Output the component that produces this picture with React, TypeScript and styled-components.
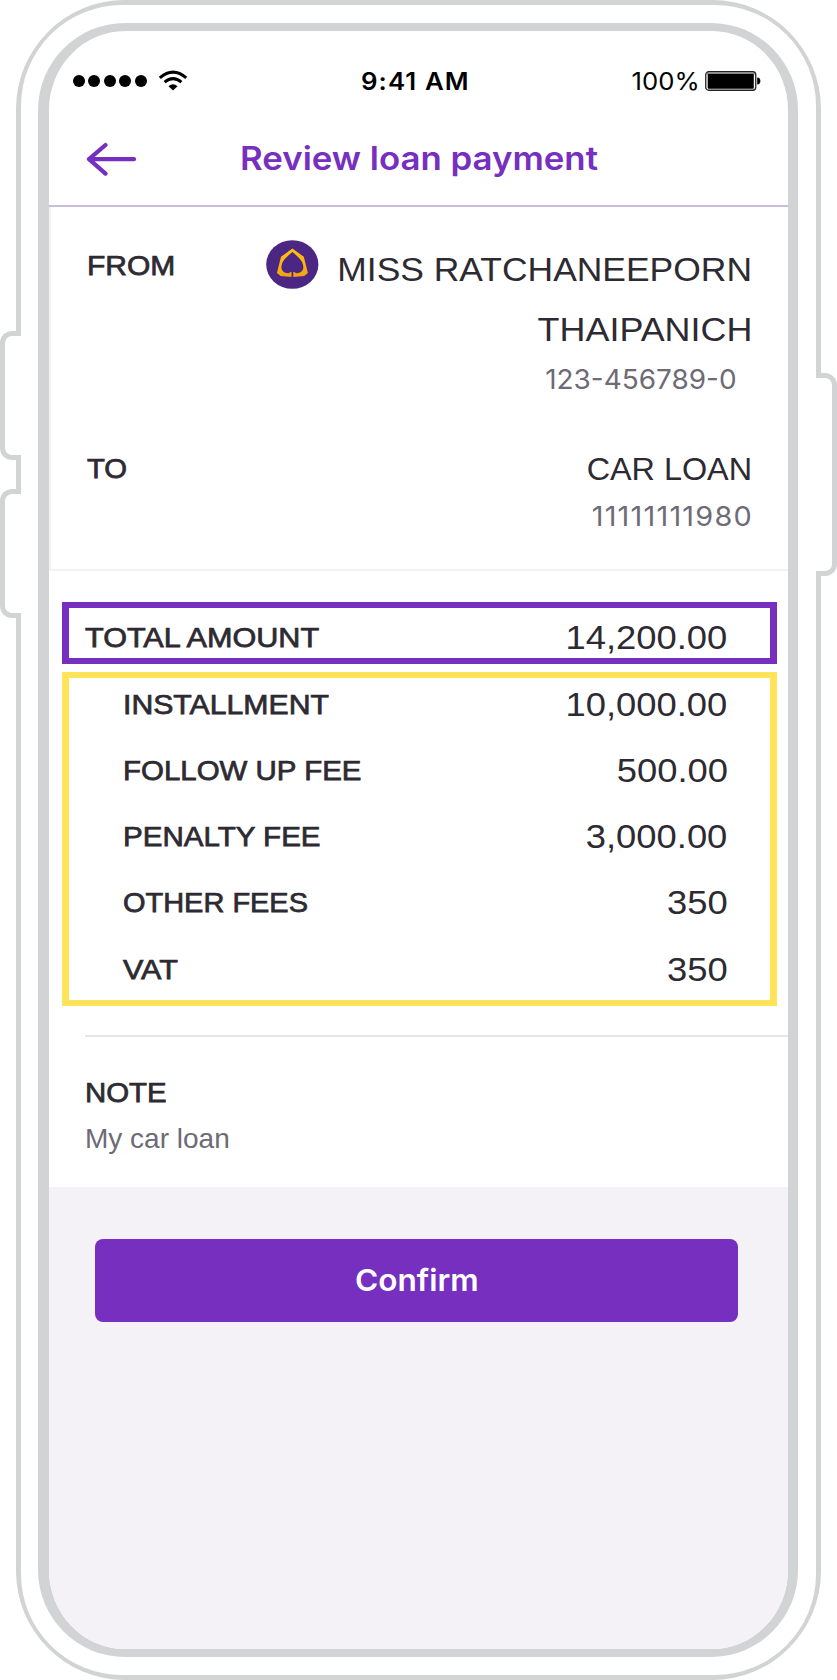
import React from "react";
import styled, { createGlobalStyle } from "styled-components";

const purple = "#762fbf";
const ink = "#2d2a32";
const muted = "#6e6a76";
const bezel = "#d1d3d4";
const helvetica = `"Liberation Sans", Arial, sans-serif`;
const inter = `Inter, "Liberation Sans", sans-serif`;

const GlobalStyle = createGlobalStyle`
  *, *::before, *::after { box-sizing: border-box; }
  body { margin: 0; background: #fff; font-family: ${helvetica}; color: ${ink}; }
`;

/* ---------- device ---------- */

const Device = styled.div`
  position: relative;
  width: 837px;
  height: 1680px;
  padding: 0 16px;
`;

const OuterEdge = styled.div`
  height: 100%;
  padding: 5px;
  border-radius: 109px;
  background: ${bezel};
`;

const Casing = styled.div`
  height: 100%;
  padding: 18px 18px 18px 17px;
  border-radius: 101px;
  background: #fff;
`;

const InnerEdge = styled.div`
  height: 100%;
  padding: 8px 10px 8px 11px;
  border-radius: 87px;
  background: ${bezel};
`;

const Screen = styled.main`
  display: flex;
  flex-direction: column;
  height: 100%;
  overflow: hidden;
  border-radius: 76px / 79px;
  background: #fff;
`;

const SideButton = styled.span<{ $side: "left" | "right"; $top: number; $height: number }>`
  position: absolute;
  top: ${(p) => p.$top}px;
  height: ${(p) => p.$height}px;
  width: 21px;
  background: #fff;
  border: 5px solid ${bezel};
  ${(p) =>
    p.$side === "left"
      ? "left: 0; border-right: 0; border-radius: 12px 0 0 12px;"
      : "right: 0; border-left: 0; border-radius: 0 12px 12px 0;"}
`;

/* ---------- text ---------- */

const Text = styled.span<{ $stretch: number; $end?: boolean }>`
  display: inline-block;
  white-space: nowrap;
  transform: scaleX(${(p) => p.$stretch});
  transform-origin: ${(p) => (p.$end ? "right" : "left")} center;
`;

const Label = styled(Text)`
  margin: 1px 0 -1px;
  font-size: 28px;
  line-height: 36px;
  -webkit-text-stroke: 0.75px ${ink};
`;

const Amount = styled(Text)`
  font-size: 34px;
  line-height: 36px;
`;

const AccountNumber = styled(Text)<{ $spacing?: number }>`
  font-family: ${inter};
  font-size: 26.5px;
  line-height: 36px;
  letter-spacing: ${(p) => p.$spacing ?? 0}px;
  color: ${muted};
`;

/* ---------- status bar & header ---------- */

const StatusBar = styled.div`
  display: grid;
  grid-template-columns: 312px 1fr auto;
  align-items: center;
  flex: none;
  height: 100px;
  padding-right: 27px;
  font-family: ${inter};
  font-size: 24px;
  color: #000;
`;

const Signal = styled.div`
  display: flex;
  align-items: center;
  padding-left: 23.5px;
`;

const Dots = styled.div`
  display: flex;
  gap: 3.6px;
`;

const Dot = styled.i`
  width: 12px;
  height: 12px;
  border-radius: 50%;
  background: #000;
`;

const WifiIcon = styled.svg`
  margin-left: 11px;
`;

const Time = styled(Text)`
  font-weight: 600;
  letter-spacing: 1px;
`;

const Power = styled.div`
  display: flex;
  align-items: center;
  gap: 5px;
`;

const Header = styled.header`
  display: flex;
  align-items: flex-start;
  flex: none;
  height: 76px;
  padding-left: 35px;
  border-bottom: 2px solid #cbbcdc;
`;

const BackIcon = styled.svg`
  margin-top: 11px;
`;

const Title = styled(Text)`
  margin: 7.7px 0 0 101px;
  font-family: ${inter};
  font-size: 32.5px;
  font-weight: 600;
  line-height: 40px;
  color: ${purple};
`;

/* ---------- accounts ---------- */

const Accounts = styled.section`
  flex: none;
  height: 364px;
  padding: 33px 36px 0 36px;
  border-left: 2px solid #f3f3f6;
  border-bottom: 2px solid #f3f3f6;
`;

const Party = styled.div<{ $gap?: number }>`
  display: flex;
  align-items: flex-start;
  margin-top: ${(p) => p.$gap ?? 0}px;
`;

const PartyLabel = styled.div<{ $offset?: number }>`
  display: flex;
  width: 179px;
  padding-top: ${(p) => p.$offset ?? 0}px;
`;

const PartyDetail = styled.div`
  flex: 1;
  display: flex;
  flex-direction: column;
  align-items: flex-end;
`;

const OwnerName = styled(Text)`
  font-size: 34px;
  line-height: 60px;

  &:first-child {
    margin-top: -1px;
  }
`;

const OwnerAccount = styled(AccountNumber)`
  margin: 2px 15px 0 0;
`;

const LoanName = styled(Text)`
  margin-top: 1px;
  font-size: 31.5px;
  line-height: 36px;
`;

const LoanNumber = styled(AccountNumber)`
  margin: 11px -1px 0 0;
`;

/* ---------- amounts ---------- */

const Amounts = styled.section`
  display: flex;
  flex-direction: column;
  gap: 8px;
  flex: none;
  padding: 31px 11px 29px 13px;
`;

const TotalBox = styled.div`
  height: 62px;
  padding: 8px 42.5px 0 16px;
  border: solid ${purple};
  border-width: 6px 7px;
`;

const FeesBox = styled.div`
  display: flex;
  flex-direction: column;
  gap: 30.15px;
  height: 334px;
  padding: 8px 42.5px 0 54px;
  border: solid #ffe359;
  border-width: 6px 7px;
`;

const Line = styled.div`
  display: flex;
  justify-content: space-between;
  align-items: center;
`;

const TotalLine = styled(Line)`
  height: 42px;
`;

/* ---------- note & footer ---------- */

const Note = styled.section`
  display: flex;
  flex-direction: column;
  align-items: flex-start;
  flex: none;
  height: 152px;
  margin-left: 36px;
  padding-top: 37px;
  border-top: 2px solid #e6e6eb;
`;

const NoteText = styled(Text)`
  margin-top: 11px;
  font-size: 27.2px;
  line-height: 36px;
  color: ${muted};
`;

const Footer = styled.footer`
  flex: 1;
  padding: 52px 50px 0 46px;
  background: #f4f2f6;
`;

const ConfirmButton = styled.button`
  display: flex;
  align-items: center;
  justify-content: center;
  width: 100%;
  height: 83px;
  padding-bottom: 2px;
  border: 0;
  border-radius: 8px;
  background: ${purple};
  color: #fff;
  font-family: ${inter};
  font-size: 30px;
  font-weight: 600;
`;

const ButtonText = styled(Text)`
  transform-origin: center;
`;

const fees = [
  { name: "INSTALLMENT", stretch: 1.079, amount: "10,000.00" },
  { name: "FOLLOW UP FEE", stretch: 1.052, amount: "500.00" },
  { name: "PENALTY FEE", stretch: 1.055, amount: "3,000.00" },
  { name: "OTHER FEES", stretch: 1.034, amount: "350" },
  { name: "VAT", stretch: 1.09, amount: "350" },
];

const Wifi = () => (
  <WifiIcon width="30" height="22" viewBox="0 0 30 22" fill="none" stroke="#000" strokeWidth="3">
    <path d="M1.8 7.8 Q15 -3.6 28.2 7.8" />
    <path d="M6.6 12.2 Q15 5 23.4 12.2" />
    <path d="M10.5 16.2 Q15 12.4 19.5 16.2 L15 20.4 Z" fill="#000" stroke="none" />
  </WifiIcon>
);

const Battery = () => (
  <svg width="56" height="20" viewBox="0 0 56 20">
    <rect x="0.75" y="0.75" width="50" height="18.5" rx="3" fill="#fff" stroke="#222" strokeWidth="1.3" />
    <rect x="1.9" y="1.9" width="47.7" height="2" fill="#8b8b87" />
    <rect x="2.7" y="3" width="46.1" height="14.8" rx="1" fill="#000" />
    <path d="M52.2 6.4 Q55.4 6.8 55.4 10 Q55.4 13.2 52.2 13.6 Z" fill="#000" />
  </svg>
);

const BankLogo = () => (
  <svg width="53" height="49" viewBox="0 0 53 49">
    <defs>
      <linearGradient id="gold" x1="0" y1="0" x2="0" y2="1">
        <stop offset="0" stopColor="#ffc20e" />
        <stop offset="0.7" stopColor="#f9ae13" />
        <stop offset="1" stopColor="#eea00f" />
      </linearGradient>
    </defs>
    <ellipse cx="26.3" cy="24.5" rx="26.1" ry="24.3" fill="#4b2683" />
    <path
      fill="url(#gold)"
      d="M26.4 8.6 L37.8 16.8 L41.9 33 L38.2 36 L27.3 36.9 V32 Q29 32 30 33.2 C35.5 33.4 38 30 37.2 25.8 C36.4 20.5 32.4 17 26.4 12 C20.4 17 16.4 20.5 15.6 25.8 C14.8 30 17.3 33.4 22.8 33.2 Q23.8 32 25.5 32 V36.9 L14.6 36 L10.9 33 L15 16.8 Z"
    />
  </svg>
);

export default function App() {
  return (
    <>
      <GlobalStyle />
      <Device>
        <OuterEdge>
          <Casing>
            <InnerEdge>
              <Screen>
                <StatusBar>
                  <Signal>
                    <Dots>
                      {[0, 1, 2, 3, 4].map((n) => (
                        <Dot key={n} />
                      ))}
                    </Dots>
                    <Wifi />
                  </Signal>
                  <div>
                    <Time $stretch={1.075}>9:41 AM</Time>
                  </div>
                  <Power>
                    <Text $stretch={1.07} $end>
                      100%
                    </Text>
                    <Battery />
                  </Power>
                </StatusBar>

                <Header>
                  <BackIcon
                    width="55"
                    height="34"
                    viewBox="0 0 55 34"
                    fill="none"
                    stroke={purple}
                    strokeWidth="4.2"
                    strokeLinecap="round"
                    strokeLinejoin="round"
                  >
                    <path d="M21.5 3 L5 17.2 L21.5 31.6 M5 17.2 H50" />
                  </BackIcon>
                  <Title as="h1" $stretch={1.071}>
                    Review loan payment
                  </Title>
                </Header>

                <Accounts>
                  <Party>
                    <PartyLabel $offset={7}>
                      <Label $stretch={1.072}>FROM</Label>
                    </PartyLabel>
                    <BankLogo />
                    <PartyDetail>
                      <OwnerName $stretch={1.042} $end>
                        MISS RATCHANEEPORN
                      </OwnerName>
                      <OwnerName $stretch={1.056} $end>
                        THAIPANICH
                      </OwnerName>
                      <OwnerAccount $stretch={1.054} $end>
                        123-456789-0
                      </OwnerAccount>
                    </PartyDetail>
                  </Party>
                  <Party $gap={53}>
                    <PartyLabel>
                      <Label $stretch={1.045}>TO</Label>
                    </PartyLabel>
                    <PartyDetail>
                      <LoanName $stretch={1.027} $end>
                        CAR LOAN
                      </LoanName>
                      <LoanNumber $stretch={1.09} $spacing={1.1} $end>
                        11111111980
                      </LoanNumber>
                    </PartyDetail>
                  </Party>
                </Accounts>

                <Amounts>
                  <TotalBox>
                    <TotalLine>
                      <Label $stretch={1.093}>TOTAL AMOUNT</Label>
                      <Amount $stretch={1.07} $end>
                        14,200.00
                      </Amount>
                    </TotalLine>
                  </TotalBox>
                  <FeesBox>
                    {fees.map((fee) => (
                      <Line key={fee.name}>
                        <Label $stretch={fee.stretch}>{fee.name}</Label>
                        <Amount $stretch={1.07} $end>
                          {fee.amount}
                        </Amount>
                      </Line>
                    ))}
                  </FeesBox>
                </Amounts>

                <Note>
                  <Label $stretch={1.05}>NOTE</Label>
                  <NoteText $stretch={1.03}>My car loan</NoteText>
                </Note>

                <Footer>
                  <ConfirmButton type="button">
                    <ButtonText $stretch={1.052}>Confirm</ButtonText>
                  </ConfirmButton>
                </Footer>
              </Screen>
            </InnerEdge>
          </Casing>
        </OuterEdge>
        <SideButton $side="left" $top={331} $height={129} />
        <SideButton $side="left" $top={489} $height={129} />
        <SideButton $side="right" $top={373} $height={203} />
      </Device>
    </>
  );
}
